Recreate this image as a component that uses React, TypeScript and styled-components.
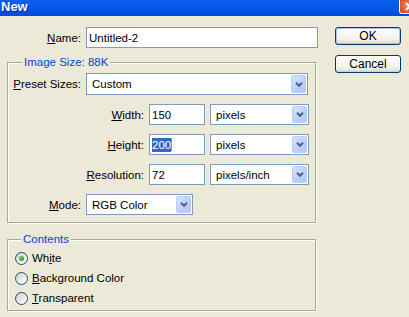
import styled, { createGlobalStyle } from "styled-components";

const GlobalStyle = createGlobalStyle`
  html, body {
    margin: 0;
    padding: 0;
    background: #ece9d8;
  }
  body {
    font-family: "Liberation Sans", Arial, sans-serif;
    font-size: 11.5px;
    color: #000;
  }
`;

const Window = styled.div`
  width: 409px;
  height: 317px;
  overflow: hidden;
  background: #ece9d8;
  display: flex;
  flex-direction: column;
`;

const TitleBar = styled.div`
  flex: none;
  height: 16px;
  display: flex;
  justify-content: space-between;
  align-items: flex-start;
  background: linear-gradient(#0a5ff0, #0055e5 60%, #0049d8);
`;

const Title = styled.span`
  color: #fff;
  font-weight: bold;
  font-size: 13px;
  line-height: 13px;
  padding: 0 0 0 1px;
  text-shadow: 1px 1px 0 #0b2487;
`;

const CloseBox = styled.div`
  width: 21px;
  height: 14px;
  margin-right: -11px;
  box-sizing: border-box;
  border: 1px solid #fff;
  border-top: none;
  border-radius: 0 0 3px 3px;
  background: radial-gradient(circle at 40% 40%, #f08a62, #d9441c 70%);
  display: flex;
  align-items: center;
  justify-content: center;
`;

const Body = styled.div`
  display: flex;
  padding: 11px 0 0 7px;
`;

const LeftCol = styled.div`
  width: 311px;
  display: flex;
  flex-direction: column;
`;

const RightCol = styled.div`
  margin-left: 17px;
  display: flex;
  flex-direction: column;
  gap: 10px;
`;

const Row = styled.div<{ $h?: number }>`
  display: flex;
  align-items: center;
  height: ${(p) => p.$h ?? 21}px;
  gap: 5px;
`;

const Label = styled.label<{ $w: number }>`
  width: ${(p) => p.$w}px;
  flex: none;
  text-align: right;
  white-space: nowrap;
`;

const Key = styled.span`
  text-decoration: underline;
`;

const TextBox = styled.div<{ $w: number }>`
  width: ${(p) => p.$w}px;
  height: 100%;
  box-sizing: border-box;
  border: 1px solid #7f9db9;
  background: #fff;
  padding-left: 2px;
  display: flex;
  align-items: center;
  white-space: nowrap;
`;

const Selected = styled.span`
  background: #316ac5;
  color: #fff;
  line-height: 14px;
`;

const Caret = styled.span`
  width: 1px;
  height: 13px;
  background: #c8922c;
`;

const Combo = styled.div<{ $w: number }>`
  width: ${(p) => p.$w}px;
  height: 100%;
  box-sizing: border-box;
  border: 1px solid #7f9db9;
  background: #fff;
  display: flex;
  align-items: center;
  padding-left: 5px;
`;

const ComboText = styled.span`
  flex: 1;
  white-space: nowrap;
`;

const ComboButton = styled.div`
  width: 15px;
  align-self: stretch;
  margin: 1px;
  box-sizing: border-box;
  border-radius: 2px;
  border: 1px solid #b9cdf7;
  background: linear-gradient(135deg, #d8e4fd, #bccffa 60%, #b0c6f7);
  display: flex;
  align-items: center;
  justify-content: center;
`;

const Group = styled.div<{ $h: number; $mt: number }>`
  position: relative;
  width: 309px;
  height: ${(p) => p.$h}px;
  margin-top: ${(p) => p.$mt}px;
  box-sizing: border-box;
  border: 1px solid #aca899;
  box-shadow: 1px 1px 0 #fff, inset 1px 1px 0 #fff;
  display: flex;
  flex-direction: column;
`;

const Legend = styled.span<{ $left: number }>`
  position: absolute;
  top: -8px;
  left: ${(p) => p.$left}px;
  padding: 0 2px;
  background: #ece9d8;
  color: #0046d5;
  line-height: 14px;
`;

const SizeFields = styled.div`
  padding: 10px 0 7px 0;
  display: flex;
  flex-direction: column;
  gap: 9px;
`;

const RadioList = styled.div`
  padding: 8px 0 0 7px;
  display: flex;
  flex-direction: column;
`;

const RadioRow = styled.div`
  height: 20px;
  display: flex;
  align-items: center;
`;

const RadioCircle = styled.span<{ $on?: boolean }>`
  width: 13px;
  height: 13px;
  box-sizing: border-box;
  border-radius: 50%;
  border: 1px solid #1c5180;
  background: linear-gradient(135deg, #cfccbf, #f0efe9 60%, #fff);
  margin-right: 4px;
  display: flex;
  align-items: center;
  justify-content: center;
  &::after {
    content: "";
    display: ${(p) => (p.$on ? "block" : "none")};
    width: 5px;
    height: 5px;
    border-radius: 50%;
    background: radial-gradient(circle at 35% 35%, #6fd36f, #21a121 70%);
  }
`;

const Button = styled.div<{ $default?: boolean }>`
  width: 66px;
  height: 18px;
  box-sizing: border-box;
  border: 1px solid #003c74;
  border-radius: 3px;
  background: linear-gradient(#ffffff, #f3f2ec 70%, #dcd8cc);
  box-shadow: ${(p) => (p.$default ? "inset 0 0 0 1px #a8c4f0" : "inset 0 -1px 0 #d6d0c5")};
  display: flex;
  align-items: center;
  justify-content: center;
  font-size: 12px;
`;

function Arrow() {
  return (
    <svg width="8" height="5" viewBox="0 0 8 5">
      <polyline points="1,0.8 4,3.8 7,0.8" fill="none" stroke="#4d6185" strokeWidth="2" />
    </svg>
  );
}

function Select(props: { w: number; value: string }) {
  return (
    <Combo $w={props.w}>
      <ComboText>{props.value}</ComboText>
      <ComboButton>
        <Arrow />
      </ComboButton>
    </Combo>
  );
}

function Radio(props: { on?: boolean; children: React.ReactNode }) {
  return (
    <RadioRow>
      <RadioCircle $on={props.on} />
      <span>{props.children}</span>
    </RadioRow>
  );
}

export default function App() {
  return (
    <>
      <GlobalStyle />
      <Window>
        <TitleBar>
          <Title>New</Title>
          <CloseBox>
            <svg width="9" height="9" viewBox="0 0 9 9">
              <path d="M1 1 L8 8 M8 1 L1 8" stroke="#fff" strokeWidth="2" />
            </svg>
          </CloseBox>
        </TitleBar>
        <Body>
          <LeftCol>
            <Row>
              <Label $w={74}>
                <Key>N</Key>ame:
              </Label>
              <TextBox $w={232}>Untitled-2</TextBox>
            </Row>

            <Group $h={161} $mt={14}>
              <Legend $left={14}>Image Size: 88K</Legend>
              <SizeFields>
                <Row $h={22}>
                  <Label $w={73}>
                    <Key>P</Key>reset Sizes:
                  </Label>
                  <Select w={222} value="Custom" />
                </Row>
                <Row>
                  <Label $w={136}>
                    <Key>W</Key>idth:
                  </Label>
                  <TextBox $w={56}>150</TextBox>
                  <Select w={99} value="pixels" />
                </Row>
                <Row>
                  <Label $w={136}>
                    <Key>H</Key>eight:
                  </Label>
                  <TextBox $w={56}>
                    <Selected>200</Selected>
                    <Caret />
                  </TextBox>
                  <Select w={99} value="pixels" />
                </Row>
                <Row>
                  <Label $w={136}>
                    <Key>R</Key>esolution:
                  </Label>
                  <TextBox $w={56}>72</TextBox>
                  <Select w={99} value="pixels/inch" />
                </Row>
                <Row>
                  <Label $w={73}>
                    <Key>M</Key>ode:
                  </Label>
                  <Select w={107} value="RGB Color" />
                </Row>
              </SizeFields>
            </Group>

            <Group $h={72} $mt={16}>
              <Legend $left={13}>Contents</Legend>
              <RadioList>
                <Radio on>
                  Wh<Key>i</Key>te
                </Radio>
                <Radio>
                  <Key>B</Key>ackground Color
                </Radio>
                <Radio>
                  <Key>T</Key>ransparent
                </Radio>
              </RadioList>
            </Group>
          </LeftCol>

          <RightCol>
            <Button $default>OK</Button>
            <Button>Cancel</Button>
          </RightCol>
        </Body>
      </Window>
    </>
  );
}
